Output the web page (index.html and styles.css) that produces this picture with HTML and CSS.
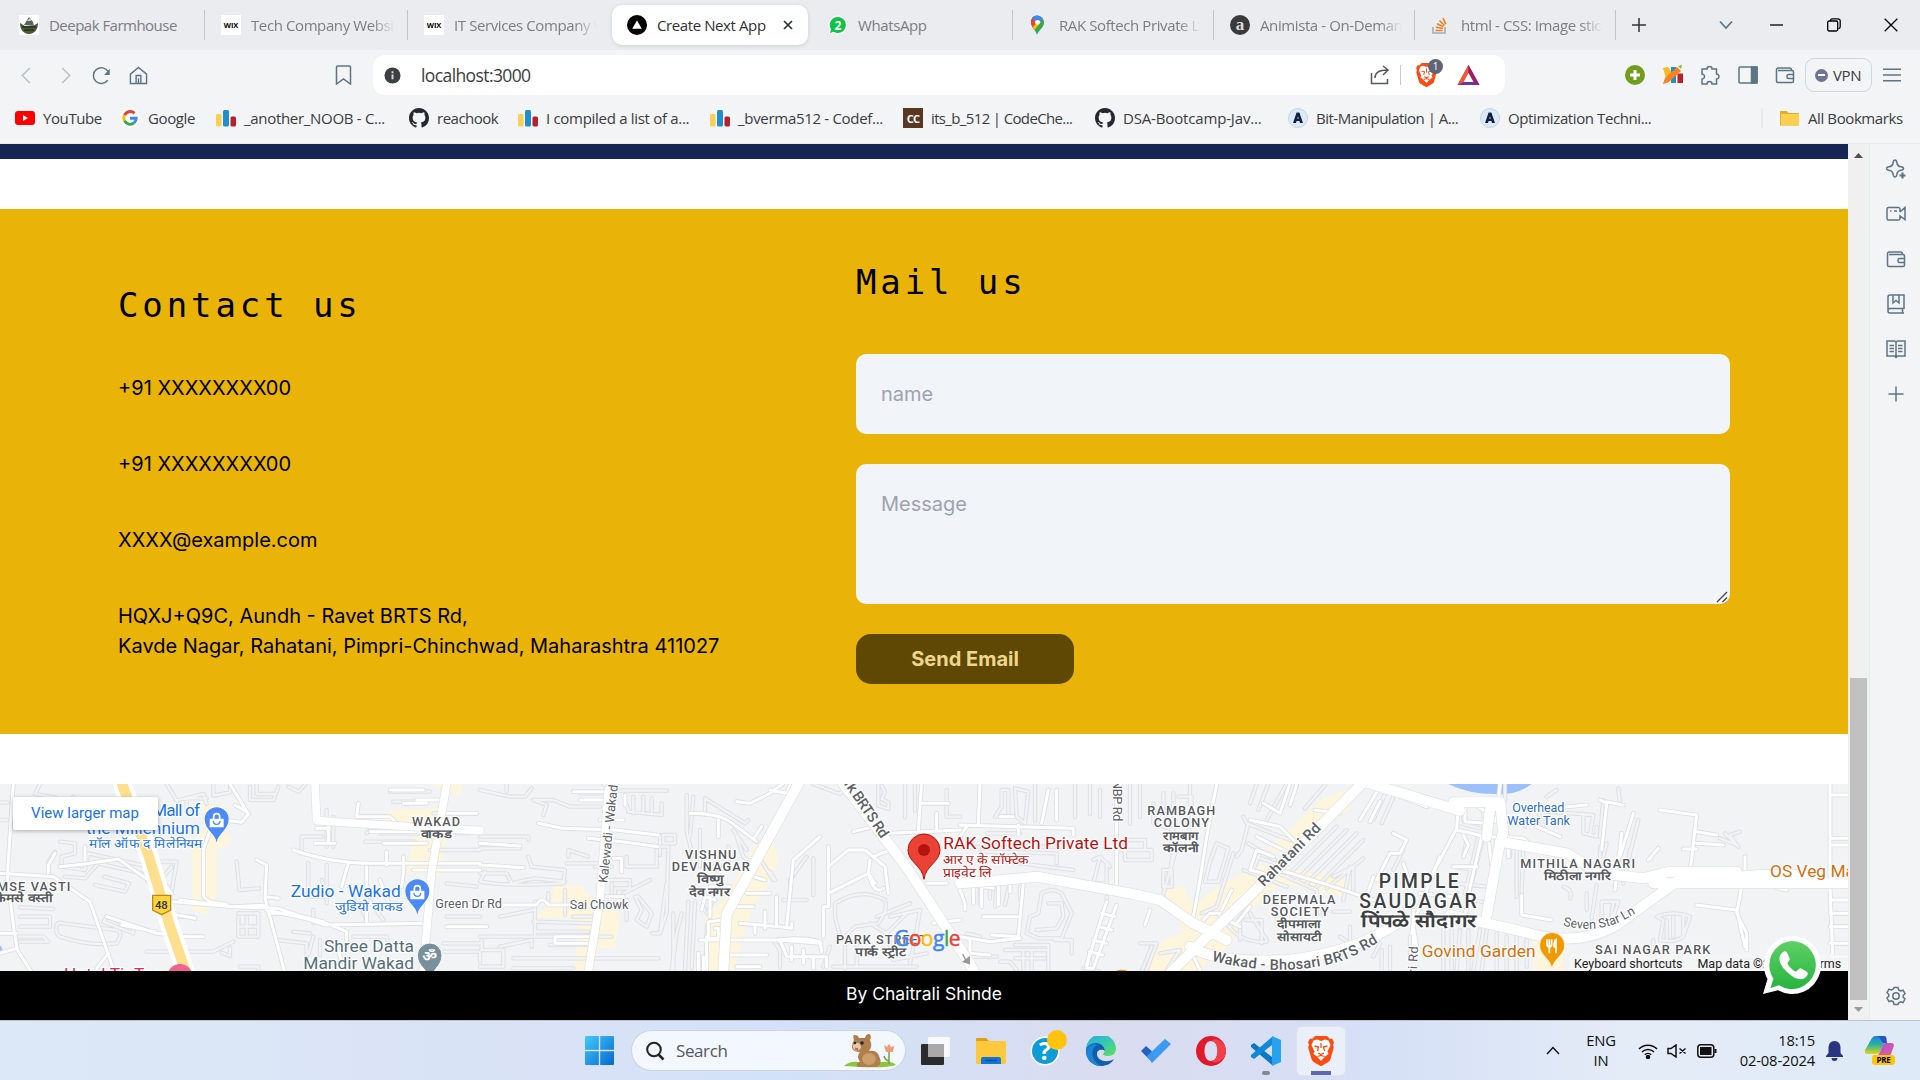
FILE: index.html
```html
<!DOCTYPE html>
<html lang="en">
<head>
<meta charset="utf-8">
<title>Create Next App</title>
<link rel="stylesheet" href="styles.css">
</head>
<body>
<svg class="defs" width="0" height="0">
  <defs>
    <symbol id="gh" viewBox="0 0 16 16"><path fill="#24292f" d="M8 0C3.58 0 0 3.58 0 8c0 3.54 2.29 6.53 5.47 7.59.4.07.55-.17.55-.38v-1.49c-2.23.48-2.7-.94-2.7-.94-.36-.92-.89-1.17-.89-1.17-.73-.5.06-.49.06-.49.8.06 1.23.83 1.23.83.71 1.23 1.87.87 2.33.66.07-.52.28-.87.5-1.07-1.77-.2-3.64-.89-3.64-3.95 0-.87.31-1.59.82-2.15-.08-.2-.36-1.02.08-2.12 0 0 .67-.21 2.2.82a7.6 7.6 0 0 1 4 0c1.53-1.04 2.2-.82 2.2-.82.44 1.1.16 1.92.08 2.12.51.56.82 1.27.82 2.15 0 3.07-1.87 3.75-3.65 3.95.29.25.54.73.54 1.48v2.2c0 .21.15.46.55.38A8 8 0 0 0 16 8c0-4.42-3.58-8-8-8z"/></symbol>
    <symbol id="cf" viewBox="0 0 20 20"><rect x="0" y="6" width="5.5" height="12.500" rx="1.500" fill="#fbcf52"/><rect x="7" y="2" width="6" height="16.500" rx="1.500" fill="#1f8fd0"/><rect x="14.500" y="8.500" width="5.500" height="10" rx="1.500" fill="#b9202c"/></symbol>
    <symbol id="brave" viewBox="0 0 26 30"><path fill="#fb4c12" d="M7 0h12l3 3 2-.4 2 3.600-1 2.600.8 2.700-3.300 11.500c-.5 1.600-1.500 2.600-3 3.600L13.500 30h-1l-6-3.400c-1.500-1-2.500-2-3-3.600L.2 11.500 1 8.800 0 6.200 2 2.600 4 3z"/><path fill="#fff" d="M13 5l4-1.500 3.500 1L22.500 9l-3 6.500 1 2.500-3.500 2.500L13 25l-4-4.500L5.500 18l1-2.500L3.500 9l2-4.500L9 3.500z"/><path fill="none" stroke="#fb4c12" stroke-width="1.300" d="M6.500 10l4 1-1 4M19.500 10l-4 1 1 4M13 7v5M10 17l3 1.500 3-1.500M9.500 20.500l3.500-1 3.500 1"/></symbol>
    <symbol id="aicon" viewBox="0 0 20 20"><circle cx="10" cy="10" r="9.500" fill="#dbe9fb" stroke="#c9d3e0"/><path d="M8.600 4.500h2.800L15 15h-3l-.6-2H8.600L8 15H5zM9.300 10.800h1.400L10 8.300z" fill="#12203f"/></symbol>
    <symbol id="wallet" viewBox="0 0 20 20"><path d="M3 3h11.500a2 2 0 0 1 2 2M3 5.500h14a1.500 1.500 0 0 1 1.500 1.500v9a1.500 1.500 0 0 1-1.500 1.500H3A1.500 1.500 0 0 1 1.500 16V4.500A1.500 1.500 0 0 1 3 3M18.500 9.500h-5a1.500 1.500 0 0 0-1.500 1.500v1a1.500 1.500 0 0 0 1.500 1.500h5"/></symbol>
    <symbol id="bag" viewBox="0 0 76 110"><path fill="#fff" d="M38 112C34 84 0 72 0 38a38 38 0 0 1 76 0c0 34-34 46-38 74z"/><path fill="#4c8bf5" d="M38 108C34 80 2 70 2 38a36 36 0 0 1 72 0c0 32-32 42-36 70z"/><path fill="#fff" d="M17 36h42v26H17z"/><path fill="none" stroke="#fff" stroke-width="5" d="M29 38v-8a9 9 0 0 1 18 0v8"/><path fill="none" stroke="#4c8bf5" stroke-width="4" d="M28 44a10 9 0 0 0 20 0"/></symbol>
    <linearGradient id="wa" x1="0" y1="0" x2="0" y2="1"><stop offset="0" stop-color="#5ed066"/><stop offset="1" stop-color="#27b43e"/></linearGradient>
    <linearGradient id="edge" x1="0" y1="0" x2="1" y2="1"><stop offset="0" stop-color="#2aa6e6"/><stop offset=".5" stop-color="#35c8b5"/><stop offset="1" stop-color="#5fe05a"/></linearGradient>
    <linearGradient id="win" x1="0" y1="0" x2="1" y2="1"><stop offset="0" stop-color="#47c8fb"/><stop offset="1" stop-color="#0368cf"/></linearGradient>
    <linearGradient id="cop" x1="0" y1="0" x2="0" y2="1"><stop offset="0" stop-color="#1580e6"/><stop offset=".5" stop-color="#2cb59a"/><stop offset="1" stop-color="#e8d418"/></linearGradient>
    <linearGradient id="cop2" x1="0" y1="0" x2="1" y2="1"><stop offset="0" stop-color="#9a50e8"/><stop offset="1" stop-color="#f0608a"/></linearGradient>
  </defs>
</svg>

<header class="tabs">
  <div class="tab"><svg class="fav" viewBox="0 0 20 20"><rect width="20" height="20" fill="#fff"/><path d="M1 8c0 7 4 11 9 11s9-4 9-11l-5 3H6z" fill="#4b5a38"/><path d="M5 10l5-8 4 5 1 4z" fill="#59665c"/><path d="M8 6l3-3 1 3z" fill="#d5dad4"/><path d="M3 12h14M5 15h10" stroke="#26301c" stroke-width="1.500"/></svg><span class="t1">Deepak Farmhouse</span></div>
  <div class="tab"><svg class="fav" viewBox="0 0 20 20"><rect width="20" height="20" fill="#fff"/><text x="10" y="12.800" text-anchor="middle" class="wix">WIX</text></svg><span class="fade t2">Tech Company Website</span></div>
  <div class="tab"><svg class="fav" viewBox="0 0 20 20"><rect width="20" height="20" fill="#fff"/><text x="10" y="12.800" text-anchor="middle" class="wix">WIX</text></svg><span class="fade t3">IT Services Company W</span></div>
  <div class="tab active"><svg class="fav" viewBox="0 0 20 20"><circle cx="10" cy="10" r="10"/><path d="M10 5.500l4.800 8.200H5.200z" fill="#fff"/></svg><span class="t4">Create Next App</span><svg class="close" viewBox="0 0 10 10"><path d="M1 1l8 8M9 1l-8 8"/></svg></div>
  <div class="tab"><svg class="fav" viewBox="0 0 20 20"><path d="M10 .5a9.500 9.500 0 1 1-5 17.700L.5 19.500 1.600 15A9.500 9.500 0 0 1 10 .5z" fill="#fff"/><path d="M10 2a8 8 0 1 1-4.500 14.700L2 18l1-3.800A8 8 0 0 1 10 2z" fill="#0fc447"/><text x="10" y="14.500" text-anchor="middle" class="badge2">2</text></svg><span class="t5">WhatsApp</span></div>
  <div class="tab"><svg class="fav" viewBox="0 0 20 20"><path d="M8 20c-1-5-6-7-6-12.500a6 6 0 0 1 6-7 7 7 0 0 1 7 7C15 13 9.500 15 8 20z" fill="#34a853"/><path d="M2 8a7 7 0 0 1 2-5.500L8 8l-4 5z" fill="#ea4335"/><path d="M3 3a6.500 6.500 0 0 1 11 1.500L9 8z" fill="#4285f4"/><path d="M3.500 12.500L10 5l2 2-6.500 8z" fill="#fbbc04"/><circle cx="8.400" cy="7.300" r="2.400" fill="#fff"/></svg><span class="fade t6">RAK Softech Private Ltd</span></div>
  <div class="tab"><svg class="fav" viewBox="0 0 20 20"><circle cx="10" cy="10" r="10" fill="#3a3a3a"/><text x="10" y="15" text-anchor="middle" class="serif-a">a</text></svg><span class="fade t7">Animista - On-Demand</span></div>
  <div class="tab"><svg class="fav" viewBox="0 0 20 20"><path d="M2 12v6h12v-6" fill="none" stroke="#a9abad" stroke-width="1.600"/><path d="M4.500 15.500h7M4.800 12.300l7 1.200M6 8.800l6.500 3M8.500 5.500l5 5M12 3l2.800 6.200" stroke="#f48024" stroke-width="1.600"/></svg><span class="fade t8">html - CSS: Image sticky</span></div>
  <div class="plus"><svg width="14" height="14" viewBox="0 0 14 14"><path d="M7 0v14M0 7h14"/></svg></div>
  <div class="wins">
    <svg width="14" height="10" viewBox="0 0 14 10"><path d="M1 1.500l6 6.500 6-6.500" stroke="#5d7583" stroke-width="1.700"/></svg>
    <svg width="14" height="14" viewBox="0 0 14 14"><path d="M0 7h13"/></svg>
    <svg width="14" height="14" viewBox="0 0 14 14"><rect x=".7" y="3" width="10" height="10" rx="1.500"/><path d="M3.500 3V2.500A1.800 1.800 0 0 1 5.300.8H11a2.200 2.200 0 0 1 2.200 2.200v5.800a1.800 1.800 0 0 1-1.800 1.800"/></svg>
    <svg width="14" height="14" viewBox="0 0 14 14"><path d="M.7.7l12.600 12.600M13.300.7L.7 13.300"/></svg>
  </div>
</header>

<div class="toolbar">
  <div class="nav">
    <svg viewBox="0 0 20 20" class="dim"><path d="M12.500 2l-8 8 8 8"/></svg>
    <svg viewBox="0 0 20 20" class="dim"><path d="M7.500 2l8 8-8 8"/></svg>
    <svg viewBox="0 0 20 20"><path d="M16.500 15A8.300 8.300 0 1 1 17 6"/><path d="M18.700 3v6.500h-6z" fill="#5d7583" stroke="none"/></svg>
    <svg viewBox="0 0 20 20"><path d="M1.500 18.500V8.500L10 1.500l8.500 7v10zM7.500 18.500V10h5v8.500M10 13v5"/></svg>
  </div>
  <svg class="mark" viewBox="0 0 20 20"><path d="M3.500 1h12a1 1 0 0 1 1 1v17l-7-5-7 5V2a1 1 0 0 1 1-1z"/></svg>
  <div class="omni">
    <svg class="info" viewBox="0 0 18 18"><circle cx="9" cy="9" r="8.500" fill="#3d4043"/><path d="M9 8v5M9 4.500v2" stroke="#ddd" stroke-width="2"/></svg>
    <span class="url">localhost:3000</span>
    <svg class="share" viewBox="0 0 20 20"><path d="M1.500 8v10.500h16V14M5 13c0-5 4-8 12-8M13 1l5 4-5 5"/></svg>
    <i class="bar"></i>
    <div class="shield"><svg width="21" height="24"><use href="#brave"/></svg><b>1</b></div>
    <svg class="bat" viewBox="0 0 22 20"><path d="M11 0l11 20H0z" fill="#6a35a0"/><path d="M11 0L0 20l6-3 5-9z" fill="#ff5429"/><path d="M11 0l11 20-6-3-5-9z" fill="#9e1f63"/><path d="M11 8l5 9H6z" fill="#fff"/></svg>
  </div>
  <div class="ext">
    <svg viewBox="0 0 20 20"><circle cx="10" cy="10" r="10" class="green"/><path d="M10 5v10M5 10h10" class="cross"/></svg>
    <svg viewBox="0 0 20 20" class="flat"><path d="M0 3l5-1 5 7-6 8z" fill="#fbb81c"/><path d="M8 2h5v16H8z" fill="#1f8fd0"/><path d="M14.500 8.500H20V18h-5.500z" fill="#b9202c"/><path d="M0 19l2-6L14 2l4 4L6 17z" fill="#f6821f"/><path d="M15 1l4-1-1 4z" fill="#7ac143"/></svg>
    <svg viewBox="0 0 20 20"><path d="M2 4h5a2.500 2.500 0 1 1 5 0h4.500v5a2.500 2.500 0 1 1 0 5v5h-4.500a2.500 2.500 0 0 0-5 0H2v-5a2.500 2.500 0 1 0 0-5z"/></svg>
    <svg viewBox="0 0 20 20"><rect x="1" y="2" width="18" height="16" rx="1"/><path d="M13.500 2H19v16h-5.500z" fill="#5d7583"/></svg>
    <svg viewBox="0 0 20 20"><use href="#wallet"/></svg>
  </div>
  <div class="vpn"><i></i>VPN</div>
  <svg class="menu" viewBox="0 0 20 16"><path d="M0 2h19M0 8h19M0 14h19"/></svg>
</div>

<nav class="marks">
  <a><svg viewBox="0 0 20 20"><rect y="3" width="20" height="14" rx="3" fill="#f00"/><path d="M8 7l5 3-5 3z" fill="#fff"/></svg>YouTube</a>
  <a><svg viewBox="0 0 20 20"><circle cx="10" cy="10" r="10" fill="#fff"/><g fill="none" stroke-width="3"><path d="M14.500 5.300A6.300 6.300 0 0 0 4.500 7.200" stroke="#ea4335"/><path d="M4.500 7.200a6.300 6.300 0 0 0 0 5.600" stroke="#fbbc05"/><path d="M4.500 12.800a6.300 6.300 0 0 0 9.600 2" stroke="#34a853"/><path d="M14.100 14.800A6 6 0 0 0 16.200 10.200H10" stroke="#4285f4"/></g></svg>Google</a>
  <a class="wide"><svg><use href="#cf"/></svg>_another_NOOB - C...</a>
  <a class="slim"><svg><use href="#gh"/></svg>reachook</a>
  <a class="wide"><svg><use href="#cf"/></svg>I compiled a list of a...</a>
  <a class="wide"><svg><use href="#cf"/></svg>_bverma512 - Codef...</a>
  <a class="narrow"><svg viewBox="0 0 20 20"><rect width="20" height="20" fill="#593723"/><text x="10" y="14.500" text-anchor="middle" class="cc">CC</text></svg>its_b_512 | CodeChe...</a>
  <a class="roomy"><svg><use href="#gh"/></svg>DSA-Bootcamp-Jav...</a>
  <a class="slim"><svg><use href="#aicon"/></svg>Bit-Manipulation | A...</a>
  <a><svg><use href="#aicon"/></svg>Optimization Techni...</a>
  <a class="all"><svg viewBox="0 0 20 20"><path d="M0 3h7l1.500 2H18a1 1 0 0 1 1 1v11.500H0z" fill="#e3b02d"/><path d="M1 6h18v11.500H1z" fill="#fbd04f"/></svg>All Bookmarks</a>
</nav>

<div class="body">
  <main class="page">
    <div class="hero-end"></div>
    <section class="contact">
      <div class="info-col">
        <h2>Contact us</h2>
        <p>+91 XXXXXXXX00</p>
        <p>+91 XXXXXXXX00</p>
        <p>XXXX@example.com</p>
        <p>HQXJ+Q9C, Aundh - Ravet BRTS Rd,<br>Kavde Nagar, Rahatani, Pimpri-Chinchwad, Maharashtra 411027</p>
      </div>
      <form class="mail">
        <h2>Mail us</h2>
        <input type="text" placeholder="name">
        <div class="area-box">
          <textarea placeholder="Message"></textarea>
          <svg class="grip" viewBox="0 0 12 12"><path d="M1 11L11 1M6.500 11L11 6.500"/></svg>
        </div>
        <button type="button">Send Email</button>
      </form>
    </section>
    <section class="map">
      <svg class="tiles" viewBox="0 42 5544 561">
        <defs>
          <g id="lanes">
            <path d="M0 98h22M0 150h22M120 42l-15 30 60 10M180 215l45 5v30l-40 10v30l70 10 10-50 180 40M165 245l-20 30v35M195 320l60 5 40-45 130 30M220 80v50h50M285 345l90 20 12-25-75-20M320 440l80 30v20l-90-35zM170 465q5-10 20-5l160 20q15 5 10 20l-10 20q-80 10-170-20-15-10-10-35zM60 412l100 5M60 440h90v30H60M50 500h80l15 15H60M440 545h200l60-30M665 548l25 10v-25M715 440v60h60v-70h-60M740 440v60M715 470h60M440 330l30 50M480 275h50l-15 90M515 290l-50 60M530 440h50M560 125v-40h60M500 42l30 50 80-20 10 30M640 42v35l50-10v-25M750 50v40h70l15-40M770 42v30h50M865 50l30 15 20-20M710 275l8 85 60-5M980 120v110M1000 140v90M925 280v100h60l-20-50M980 285v115M940 420v40M940 500l-15 55M960 510v45M720 590h55v13M830 510l90 10v70M880 485l50 5M965 200h-60v50M1170 65h120M1180 95h90M1095 215h150M1140 190h270M1100 190l20-20h100M1150 160l90 10M1300 130h130M1340 340l90 10M1340 440h100M1100 380l50 70M1060 360l40 90M1290 240h150M1060 500h100l10 40M1330 520h110M1330 545h110v30"/>
            <g transform="translate(1440 0)">
              <path d="M0 60l90 20h45l20-25M80 42v20M160 90l40 15-10 30M160 90h60l50 20h90M370 42l30 20h160M300 70h80M440 105l5 20 100 10v-35M460 80v50M490 80v45M515 85v40M0 200h145v10M0 235h120M550 195h35v25h-35zM540 195v60M525 230h40l-5 200-20 60h-25M620 75v110l25 100M640 80l-10 120M675 85l120 75 10-10M675 85v50M660 180v110M770 200l20 60 40 30M0 310h80l15 30q40-10 70-15l90 10M15 305l-15 30q80 15 250 5l5-40-100-10-10-30M265 260v-20l60 20M345 290h50M260 280h95M440 260v30h90v-50M385 330h65v25h-45v25M395 340v40M475 380l40 50-15 40-30-20 15-30-20-40zM255 360v75M205 370v20M280 440h55M165 395v100M165 485h160M60 440l100-20M160 455l180 5M0 500h220M210 525h120M5 510v30h65v50H0M60 530l95-20v20M100 565h220M100 595h180M345 565h190M340 500h55M440 390v60M430 370l80-40M580 430v170M605 430l-15 60-15 110M625 395l-10 205M645 395l-10 200M680 360v50M700 390l-20 40M680 470v130M520 490h20l20-150M745 230v50M760 180l40 60M830 250l50 80M870 305l15 25M980 260l-50 70v60M1000 265v110M910 390h70M1065 400q80-50 150-10 10 30-20 70l-70 10-40 40-10-30-10-40zM1170 460l50 30 20 70M1190 440l100-40M1210 500l70-70M1230 440l90-20-10 60-20 100M1050 530l-20 60M1095 530v65M1130 520v70M1060 590h250M1240 570l100-20M900 590v-50l-20-30h80M1000 42l80 30 20-30M1195 42v65l30 10v-20l-20-10 10-20-10-20M1275 42v100M1305 42v80M1400 60v80h40"/>
            </g>
            <g transform="translate(2880 0)">
              <path d="M125 60h20v80h-40l20-30zM165 55l40 10-10 95-25-20zM225 42v110M345 42v100M390 42v90M420 60v80M510 42v120M540 42v100M80 190h100M0 230h330M60 245l230 5v30M100 270l240 30M440 285v55h-40l20-80M400 270l20-10 30 30M440 380v20M480 240h95v30h-80v-50M495 210h60v30M580 100v60l60 20v-110M610 70v60M655 80h40v90M690 42v60M640 240l-10 70M610 300h25v50h-25zM645 250l-40 140M770 220l35 15-30 100h-40l15-60zM820 250l-50 160-45 20M245 370q30-20 60 0l30 60-30 75h-70l-35-15 10-50 25-10zM265 400h40l5 40-20 35-60 5M165 525h100v80M135 540h130M120 575h30l20 25M190 540v65M215 540v65M165 565h90M540 520h50l-30 80M575 530l-30 75M600 550l60-10-40 60M285 510h50v40M370 595l50 10M390 545v60M20 490l40 10M30 560h80M60 360v40M90 360v25M110 350l-5 60M145 355l-10 50M180 350v40M850 140l10 20q100 40 160 60M865 160l-20 80-15 20M865 220l80 50M885 260l60 20M900 250l-20 50M850 300l130 50M930 300l140 60M980 320l150-150M1010 330l150-150M1040 340l150-150M1070 350l140-140M1100 355l110-90M1120 320l60-30v70M870 100l20-58M895 120l30-78M920 150l60-108M1035 115l60-70M1240 150l40-90M1265 160l40-90M1300 300l30-60M1170 290l-20 100M1080 430l-10-70M840 440v70M850 410l-40 60M870 430l50 80M905 520v-70h-50M800 460q40 60 120 55M1120 425h50M1170 470v50l-30-20M1240 560l20-40M1265 540v60M1290 530v70M1350 500v60"/>
            </g>
            <g transform="translate(4200 0)">
              <path d="M180 110v50l60 15M250 110v30l50 10M315 42v50M385 120l-10 50M410 110l20 60M440 80l30-20M440 125l140 10-10 60M550 130v60l40 10v-30M610 90l-10 110M655 55l5 45M600 230v70M620 220l-15 60M665 225l-20 130M690 240l-20 100M715 150l-30 120M960 205l50 20-20-30 30-10M975 190l40 40M290 200l-5 80M330 210v50M250 200l-40 160M235 200l-40 170M350 230v150M370 230l-5 140M200 210l-10 50M160 290l60 10M170 340l90 10M220 390l45 10M560 370v50M590 345l-15 100M605 395h50l-20 60h-30zM490 350q30 10 20 35M640 400l-10 60M770 440q50-20 100 0l-20 60q-30 20-70 10l10-60zM800 450v60M820 440v60M850 440v50M240 480l-20 120M260 480l-15 120M290 490v110M320 500v100M350 500v100M130 480v120M155 480v120M180 480l-10 120M205 480v120M380 510v80M760 510v70l-30 10M1010 570l120 10M1050 590h120"/>
            </g>
          </g>
          <g id="streets">
            <path d="M40 42L22 320l20 160 10 60 40 63M0 310l160 10 110 75 72 208M290 595l35-45M0 490h48M0 550l50-15M145 310v-25l20-35M180 290l75-8 100-15 85 60M255 270v-40M380 200l60 70 75 100M520 395l180 15 100-5M390 200l80 20-30-40M630 180l-20 60v140l20 15 50 8M690 42l55 90-20 25-80-10M740 125l-35-20M770 270l30 15-5 100 60 225M795 380l40 5M800 420l180 40M560 500h50M530 435l55 10M465 485l-100-20M320 440l150 50 90 10M540 390l160 20 135 5 140 50 300-5M810 430h60l100 25M880 240q110 40 240 40h320M980 460l60 25v40h-30l15 50M1100 290v170M1045 280l-20 70M1160 245v40M1210 260v50M1150 220h130M1440 300h-200M1075 100l-5 40h100l20 20M985 165v55M950 175h40M945 220h60M1110 185h150M1250 90h80M1170 60h100M1210 100h70M1330 400h110M1340 470h100M1330 130h100M955 130l-15-90M1210 310l-5 40M1170 410l-30-80"/>
            <g transform="translate(1440 0)">
              <path d="M175 160l70 15 160 5 130 15M325 205l100 10 110 15M280 65h110M300 90h90M360 150h70M0 220l120 8M0 285l130 8M0 405h170q15-30 35 0h150M0 470h20M225 500h110v20H225zM400 265h25v40M380 380h50M435 75v30M630 130q80 0 120 25l80 60M715 150v50M770 95l40 5 60-30 40-30M870 60l50 10 10-25M825 200l20-30M780 460l120 10 35 5v-15M855 425v50M825 470v20M770 410h50M690 350h60M690 380v60M705 390l-30-10-10 40M735 450l-50 5v50h30v-30h-10M680 500v100M660 510h240l120 10M900 510l20 50h80v35M935 530v40M970 540v40M890 510q80-10 130 5l5 30M750 555h110M770 590h70M820 320l35 10M800 370h70M890 380v90M920 470l20-200 80-70M1045 230v180h-15v90M1045 290l60-50h50l60 50 10 80M1045 370l120-60 10 30q15 30 35 15M1180 260l50-20M1170 270l-5 40 20 30M1230 190l210-10M1120 185l60-15M1325 42l-10 140M1320 100h85M1370 130v50M1340 340h60M1360 460l80-10M655 550v50M670 560v40M1000 560h40v30"/>
            </g>
            <g transform="translate(2880 0)">
              <path d="M60 42l-5 120M0 165l340 10v20M175 165v30M0 200l20-30M0 340l100 15M0 360l15 40v20M65 350v60M40 355v45M115 330v75M150 335v30M190 340l-15 160-80-5M70 440h110M0 500l90 15 90-10M30 510v40l60 5M440 395l-60 190M470 405l-70 190h-20l10-50M425 430l40 10M415 470l40 10M400 510l40 10M388 545l40 10M470 42v330M770 42L740 200l-20 130-20 110M265 60l-20 100M290 60v90M120 140h40M570 420l-15 45M780 430h-30l-20 20M815 360l-30 60M830 460l40-50M780 440l60 30M870 150l90 20 60 60M890 200l100 50M940 260l-50-20-20 60 40 10M960 300l160 50 120 40M1140 130l-75-10M1200 150l60-100M1230 155l30-60M1300 190l40 20-20 40h-30l-40 80M1440 260l-80 200-5 30M1240 320l-20 60M1360 470l10 60M700 560l20 40M910 100l50 30 30-90M990 105l20-60M1320 80l80 30"/>
            </g>
            <g transform="translate(4200 0)">
              <path d="M175 105l-5 70-90 170M195 110v45l70 5 30-10-60-40M0 60l80 50M170 180l90 20 110 5 50 40h60M245 200l-40 175M265 205l10 80M325 200v60M160 290h70M190 195l15 30-15 35M40 420v150M60 370l100 10M210 380l-20 70M365 375v60l90 15M300 42l-5 50M410 170l70 30M780 120l110 15-15 130-5 40M890 185l60 10M890 220l80 5M850 237h40M745 270l30-35M600 90l20 10-15 140M665 190l-20 170M700 130l-40 130M620 95l50 10M840 325l-60 40-70 55M890 405l120 15 25 110M1025 350l-15 80 30 60v50M1035 260v50M1060 350l20-10 80 20M1290 42v310l10 250M1290 75h60M1290 205h60M1290 225h60M1290 390h60M1290 430h60M1290 470h60M1290 520h60M1290 560h60M500 110l60-5M30 340l-20-60"/>
            </g>
          </g>
          <g id="roads">
            <path d="M945 42l5 110 150 10 340 20"/>
            <path d="M1340 42l-45 260-25 300"/>
            <g transform="translate(1440 0)"><path d="M385 60l-25 330-35 213"/></g>
          </g>
          <g id="arterials">
            <path d="M2395 42l-215 390-10 171M2530 42l190 250 190 290 20 40"/>
            <path d="M2880 340l130-10 100-10 280 50 90 20 100 70 100 50M3500 620l100-100 240-230 245-248"/>
            <path d="M3570 530q80 50 290 40 200-20 340-115M4080 32l300 90M4480 100l-10 20-10 80M4360 97h140l10 90-10 30-40 220M4500 215l200 35 100 60 130 15 80-20h200"/>
            <path d="M4350 435l220 50q160 50 280-20l180-130 250-20h140"/>
            <path d="M4960 340h600"/>
          </g>
        </defs>
        <rect y="42" width="5544" height="561" fill="#f1f3f5"/>
        <g class="sand">
          <path d="M605 180h70l20 30-20 20-25 10v150l-45-5 20 50-50-15V240zM600 100l80 10v40h-60M1170 120l150-5-20 80-160-50zM1240 200h100l-20 120-40-10h-60zM1290 42h100l-15 35z"/>
          <path transform="translate(1440 0)" d="M220 350l90-5v20l110 70-15 100h-50l-15 68h-60l20-110-10-50H165l50-50zM830 220l50-10 15 60-30 70-50 80-30 90-20 93h-95l5-160 60-60z"/>
          <path transform="translate(2880 0)" d="M610 360l60-10 30 60 60-50 120-70 70-10 50 20 170 20-10 60-200-40-110 100-40 90-40 20-60 60H550l60-100 60-20-20-60zM920 240L1080 90l80-30 15 50-100 80-80 60z"/>
          <path d="M4600 510h90v93h-90z"/>
        </g>
        <path d="M4345 42h250q-45 35-110 30-80 0-140-30z" fill="#9cc0f9"/>
        <path d="M0 525l8 12-8 8z" fill="#9cc0f9"/>
        <use href="#lanes" class="lane-edge"/><use href="#lanes" class="lane"/>
        <use href="#streets" class="st-edge"/><use href="#streets" class="st"/>
        <use href="#roads" class="rd-edge"/><use href="#roads" class="rd"/>
        <use href="#arterials" class="art-edge"/><use href="#arterials" class="art"/>
        <path class="hw-edge" d="M362 30l85 230 60 200 55 160"/><path class="hw" d="M362 30l85 230 60 200 55 160"/>
        <path d="M2888 552l10 20M2890 575l18 6 0-20z" stroke="#999" stroke-width="4" fill="#999"/>
        <path d="M458 376h54v44l-27 14-27-14z" fill="#fbd33c" stroke="#b98b19" stroke-width="4"/>
        <g class="lbl">
          <text x="484" y="416" text-anchor="middle" class="shield-no">48</text>
          <g class="poi blue">
            <text x="600" y="137" text-anchor="end" textLength="144">Mall of</text>
            <text x="600" y="192" text-anchor="end" textLength="342">the Millennium</text>
            <text x="608" y="234" text-anchor="end" class="hi" textLength="340" lengthAdjust="spacingAndGlyphs">मॉल ऑफ द मिलेनियम</text>
            <text x="1202" y="380" text-anchor="end" textLength="330">Zudio - Wakad</text>
            <text x="1210" y="424" text-anchor="end" class="hi" textLength="204" lengthAdjust="spacingAndGlyphs">जुडियो वाकड</text>
          </g>
          <g class="poi slate">
            <text x="1242" y="545" text-anchor="end" textLength="270">Shree Datta</text>
            <text x="1242" y="598" text-anchor="end" textLength="332">Mandir Wakad</text>
          </g>
          <text x="490" y="630" text-anchor="end" class="poi pink" textLength="298">Hotel TipTop</text>
          <g class="area">
            <text x="1308" y="167" textLength="144">WAKAD</text><text x="1308" y="204" class="hi" textLength="92" lengthAdjust="spacingAndGlyphs">वाकड</text>
            <text x="101" y="362" textLength="220">MSE VASTI</text><text x="72" y="397" class="hi" textLength="172" lengthAdjust="spacingAndGlyphs">केमसे वस्ती</text>
            <text x="2132" y="266" textLength="154">VISHNU</text><text x="2132" y="303" textLength="234">DEV NAGAR</text>
            <text x="2130" y="340" class="hi" textLength="76" lengthAdjust="spacingAndGlyphs">विष्णु</text><text x="2129" y="378" class="hi" textLength="124" lengthAdjust="spacingAndGlyphs">देव नगर</text>
            <text x="2644" y="522" textLength="272">PARK STREET</text><text x="2642" y="558" class="hi" textLength="152" lengthAdjust="spacingAndGlyphs">पार्क स्ट्रीट</text>
            <text x="3544" y="135" textLength="204">RAMBAGH</text><text x="3544" y="172" textLength="166">COLONY</text>
            <text x="3543" y="209" class="hi" textLength="108" lengthAdjust="spacingAndGlyphs">रामबाग</text><text x="3543" y="246" class="hi" textLength="106" lengthAdjust="spacingAndGlyphs">कॉलनी</text>
            <text x="3897" y="401" textLength="218">DEEPMALA</text><text x="3899" y="438" textLength="174">SOCIETY</text>
            <text x="3897" y="475" class="hi" textLength="132" lengthAdjust="spacingAndGlyphs">दीपमाला</text><text x="3897" y="512" class="hi" textLength="134" lengthAdjust="spacingAndGlyphs">सोसायटी</text>
            <text x="4733" y="294" textLength="344">MITHILA NAGARI</text><text x="4733" y="331" class="hi" textLength="200" lengthAdjust="spacingAndGlyphs">मिठीला नगरि</text>
            <text x="4958" y="552" textLength="346">SAI NAGAR PARK</text>
          </g>
          <g class="city">
            <text x="4256" y="354" textLength="240">PIMPLE</text><text x="4254" y="414" textLength="352">SAUDAGAR</text>
            <text x="4256" y="472" class="hib" textLength="344" lengthAdjust="spacingAndGlyphs">पिंपळे सौदागर</text>
          </g>
          <g class="road-name">
            <text x="1306" y="415" textLength="200">Green Dr Rd</text>
            <text x="1709" y="416" textLength="176">Sai Chowk</text>
            <text transform="translate(1822 340) rotate(-84)" textLength="296">Kalewadi - Wakad</text>
            <text transform="translate(2505 2) rotate(56)" textLength="248" class="mid">Park BRTS Rd</text>
            <text transform="translate(3338 30) rotate(90)" textLength="124">NBP Rd</text>
            <text transform="translate(3792 352) rotate(-45.500)" textLength="246" class="mid">Rahatani Rd</text>
            <path id="bhosari" d="M3634 572q220 56 400-2 60-25 130-72" fill="none"/>
            <text class="mid"><textPath href="#bhosari" textLength="520">Wakad - Bhosari BRTS Rd</textPath></text>
            <path id="seven" d="M4688 466q110 30 200-25 25-14 50-30" fill="none"/>
            <text><textPath href="#seven" textLength="230">Seven Star Ln</textPath></text>
            <text transform="translate(4250 612) rotate(-87)" textLength="82">ri Rd</text>
          </g>
          <g class="water"><text x="4615" y="125" textLength="156">Overhead</text><text x="4616" y="166" textLength="188">Water Tank</text></g>
          <g class="poi red">
            <text x="2830" y="237" textLength="554">RAK Softech Private Ltd</text>
            <text x="2830" y="281" class="hi" textLength="258" lengthAdjust="spacingAndGlyphs">आर ए के सॉफ्टेक</text>
            <text x="2830" y="322" class="hi" textLength="146" lengthAdjust="spacingAndGlyphs">प्राइवेट लि</text>
          </g>
          <g class="poi orange"><text x="4265" y="562" textLength="342">Govind Garden</text><text x="5310" y="320">OS Veg Mart</text></g>
        </g>
        <use href="#bag" x="612" y="110" width="76" height="110"/>
        <use href="#bag" x="1214" y="326" width="76" height="110"/>
        <path d="M1290 628c-4-28-38-38-38-72a37 37 0 0 1 74 0c0 34-32 44-36 72z" fill="#78909c" stroke="#fff" stroke-width="3"/><text x="1289" y="574" text-anchor="middle" class="om">ॐ</text>
        <circle cx="540" cy="620" r="38" fill="#f06292"/>
        <ellipse cx="3366" cy="614" rx="26" ry="15" fill="#f29900"/>
        <path d="M2772 328c-5-42-48-52-48-88a48 48 0 0 1 96 0c0 36-43 46-48 88z" fill="#ea4335" stroke="#b31412" stroke-width="3"/><circle cx="2772" cy="240" r="18" fill="#b31412"/>
        <path d="M4656 598c-4-34-37-40-37-73a37 37 0 0 1 75 0c0 33-34 39-38 73z" fill="#f29900" stroke="#fff" stroke-width="2"/><path d="M4641 508v14q0 9 7 9t7-9v-14M4648 508v42M4668 550v-42q-6 4-6 22h6" stroke="#fff" stroke-width="5" fill="none"/>
      </svg>
      <a class="larger">View larger map</a>
      <div class="glogo"><i>G</i><i>o</i><i>o</i><i>g</i><i>l</i><i>e</i></div>
      <div class="attrib"><span>Keyboard shortcuts</span><span>Map data ©2024</span><span class="terms">Terms</span></div>
    </section>
    <footer>By Chaitrali Shinde</footer>
    <svg class="wa" viewBox="0 0 60 60"><path d="M30 1a29 29 0 1 1-14 54.300L1 59l4.500-15A29 29 0 0 1 30 1z" fill="#fff"/><path d="M30 6a24 24 0 1 1-13 44.300L8.500 53l3-9.500A24 24 0 0 1 30 6z" fill="url(#wa)"/><path d="M21 17c-6 5-4 12 3 19s15 11 20 6c3-3 2-5-1-6.500l-4-2c-2-1-3 2-4.500 3-2 .5-8-5-9-8 0-2 3-2.500 2-5l-2-5c-1-2.500-2.500-3-4.500-1.500z" fill="#fff"/></svg>
  </main>
  <div class="scroll"><svg width="9" height="6" viewBox="0 0 9 6"><path d="M4.500 0L9 5H0z" fill="#4f4f4f"/></svg><i></i><svg width="9" height="6" viewBox="0 0 9 6"><path d="M0 0h9L4.500 5z" fill="#9b9b9b"/></svg></div>
  <aside class="side">
    <svg viewBox="0 0 20 20"><path d="M9 1q1.500 0 1.800 2.500.7 4 4.200 4.200 2.500.3 2.500 1.800t-2.500 1.800q-3.500.4-4.200 4.200Q10.500 18 9 18t-1.800-2.500Q6.500 11.700 3 11.300.5 11 .5 9.500T3 7.700q3.500-.2 4.200-4.200Q7.500 1 9 1z"/><path d="M16.500 13.500v6M13.500 16.500h6" stroke-width="2.200"/></svg>
    <svg viewBox="0 0 20 20"><path d="M14 8V5a1.500 1.500 0 0 0-1.500-1.500h-10A1.500 1.500 0 0 0 1 5v9.500A1.500 1.500 0 0 0 2.500 16h10a1.500 1.500 0 0 0 1.500-1.500V12l5 3.500v-12L14 8M4 7h1.500M8 7h3"/></svg>
    <svg viewBox="0 0 20 20"><use href="#wallet"/></svg>
    <svg viewBox="0 0 20 20"><path d="M18 15V1H4a2 2 0 0 0-2 2v14a2 2 0 0 0 2 2h14M2 17a2 2 0 0 1 2-2.500h14M16.500 15v4M7 1v8l3-2.500L13 9V1"/></svg>
    <svg viewBox="0 0 20 20"><path d="M1 2h7.500L10 3l1.500-1H19v15h-7.500L10 18.500 8.500 17H1zM10 3v15M3.500 6.500H8M3.500 9.500H8M3.500 12.500H8M12 6.500h4.500M12 9.500h4.500M12 12.500h4.500"/></svg>
    <svg viewBox="0 0 20 20"><path d="M10 2.500v15M2.500 10h15"/></svg>
    <svg class="gear" viewBox="0 0 20 20"><circle cx="10" cy="10" r="3.200"/><path d="M8 1.500h4l.7 2.500 1.800 1 2.500-.8 2 3.500-1.800 1.800v1.800l1.800 1.700-2 3.500-2.500-.7-1.800 1L12 18.500H8l-.7-2.700-1.800-1-2.500.7-2-3.500 1.800-1.700V8.500L1 6.700l2-3.500 2.500.8 1.800-1z"/></svg>
  </aside>
</div>

<footer class="taskbar">
  <svg class="start" viewBox="0 0 30 30"><path d="M0 1a1 1 0 0 1 1-1h13.300v14.300H0zM15.700 0H29a1 1 0 0 1 1 1v13.300H15.700zM0 15.700h14.300V30H1a1 1 0 0 1-1-1zM15.700 15.700H30V29a1 1 0 0 1-1 1H15.700z" fill="url(#win)"/></svg>
  <div class="search"><svg width="20" height="20" viewBox="0 0 20 20"><circle cx="9" cy="8.500" r="6.800" fill="none" stroke="#222" stroke-width="2"/><path d="M13.500 13.500l5 5" stroke="#222" stroke-width="2.500"/></svg><span>Search</span>
    <svg width="52" height="34" viewBox="0 0 52 34"><path d="M0 32q6-5 14-4h26q8-1 12 3-12 4-52 1z" fill="#8cc63f"/><path d="M10 6q-2-5 1-5 3 0 4 3h6q1-4 4-4 3 1 1 6 3 6-1 11 8-1 10 5 4 8-2 11H15q-3 0-2-3 1-2 3-2-4-6 0-10-8 0-8-5 0-4 2-7z" fill="#b07d4b"/><ellipse cx="25" cy="25" rx="7" ry="6" fill="#c9a06d"/><path d="M9 13q0-4 4-4t4 5q-3 4-7 2z" fill="#e6cba4"/><circle cx="18" cy="9" r="1.800" fill="#1d2c50"/><circle cx="11" cy="9" r="1.200" fill="#1d2c50"/><path d="M11 14.500l3 1" stroke="#c2604f" stroke-width="2"/><path d="M45 30V17M45 27q-4-1-5-5" stroke="#6da544" stroke-width="1.500" fill="none"/><path d="M40 11l3 2 2-3 2 3 3-1-1 6h-7z" fill="#f29b76"/></svg>
  </div>
  <div class="apps">
    <svg viewBox="0 0 30 30"><rect x="0" y="8" width="23" height="21" rx="1" fill="#2b2b2b"/><rect x="7" y="1" width="22" height="20" rx="1" fill="#fff" opacity=".85"/><path d="M7 8h16v13H7z" fill="#a9a9a9"/></svg>
    <svg viewBox="0 0 30 30"><path d="M0 3a1 1 0 0 1 1-1h9l3 3h16v8H0z" fill="#e09f13"/><rect y="5" width="30" height="23" rx="1" fill="#fcc93c"/><path d="M5 28v-5a2 2 0 0 1 2-2h16a2 2 0 0 1 2 2v5z" fill="#1177d6"/><path d="M9 24.500h12" stroke="#0a4f96" stroke-width="1.500"/></svg>
    <svg viewBox="0 0 30 30" overflow="visible"><circle cx="14" cy="15" r="14.500" fill="#fff"/><circle cx="14" cy="15" r="13" fill="#0d9cd6"/><text x="14" y="24" text-anchor="middle" class="help">?</text><circle cx="26" cy="4" r="10" fill="#ffc20e"/></svg>
    <svg viewBox="0 0 30 30"><path d="M0 15A15 15 0 0 1 30 12c0 5-3 8-8 8-4 0-5-1-5-2l2-3c0-5-4-6-7-6-6 0-11 3-12 8z" fill="url(#edge)"/><path d="M0 14c1-4 5-7 10-7s9 4 9 8c-2-2-8-2-8 3s6 8 11 7c2 0 4-1 6-2-3 5-8 7-13 7C6 30 0 23 0 15z" fill="#0f5fae"/><path d="M0 15c2-6 8-8 12-6-7 1-9 14 3 21C6 30 0 23 0 15z" fill="#1b84d6"/></svg>
    <svg viewBox="0 0 30 30"><path d="M0 15l5-5 8 7-2 9z" fill="#2263c4"/><path d="M6 20L24 3l6 5-19 19z" fill="#3c9bf0"/></svg>
    <svg viewBox="0 0 30 30"><path fill-rule="evenodd" d="M15 0a15 15 0 1 1 0 30 15 15 0 0 1 0-30zm0 5c-4 0-6.500 4-6.500 10s2.500 10 6.500 10 6.500-4 6.500-10S19 5 15 5z" fill="#e2182c"/><path d="M15 5C19 0 30 6 30 15S20 29 15 25c4 0 6.500-4 6.500-10S19 5 15 5z" fill="#f5404a"/></svg>
    <svg viewBox="0 0 30 30" overflow="visible"><path d="M0 9l3-2 18 14v8L0 11z" fill="#0a78c2"/><path d="M0 21l3 2L21 9V1L0 19z" fill="#0f8ad8"/><path d="M21 0l9 4v22l-9 4z" fill="#27a3ee"/><rect x="11" y="35" width="8" height="4" rx="2" fill="#84898f"/></svg>
    <div class="cur"><svg width="26" height="30"><use href="#brave"/></svg></div>
  </div>
  <div class="tray">
    <svg class="up" width="14" height="9" viewBox="0 0 14 9"><path d="M1 8l6-6.500L13 8"/></svg>
    <span class="lang">ENG<br>IN</span>
    <svg class="wifi" width="20" height="16" viewBox="0 0 20 16"><path d="M1 6a12.500 12.500 0 0 1 18 0M4 9a8.500 8.500 0 0 1 12 0M6.800 11.800a4.600 4.600 0 0 1 6.400 0"/><circle cx="10" cy="14" r="1.500" fill="#111"/></svg>
    <svg class="mute" width="20" height="14" viewBox="0 0 20 14"><path d="M1 4.500h3L9 1v12L4 9.500H1zM12.500 4.500l6 5M18.500 4.500l-6 5"/></svg>
    <svg class="batt" width="20" height="14" viewBox="0 0 20 14"><rect x=".8" y=".8" width="16" height="12.400" rx="3"/><rect x="3" y="3" width="11.500" height="8" fill="#111" stroke="none"/><path d="M18.500 5v4" stroke-width="2"/></svg>
    <span class="clock">18:15<br>02-08-2024</span>
    <svg class="bell" width="17" height="20" viewBox="0 0 17 20"><path d="M8.500 0c4 0 6 3 6 7v5l2.500 3v1H0v-1l2.500-3V7c0-4 2-7 6-7zM5.500 17h6a3 3 0 0 1-6 0z" fill="#2b3480" stroke="none"/></svg>
    <svg class="copilot" width="30" height="30" viewBox="0 0 30 30"><path d="M7 2q1-2 4-2h8q3 0 2 3l-6 13q-1 2-4 2H2q-3 0-2-4z" fill="url(#cop)"/><path d="M20 7h6q4 0 2.500 4L26 18q-1 2-3 2H11q3-1 4-4l3-7q.7-2 2-2z" fill="url(#cop2)"/><path d="M12 0h7q2 0 2.500 3L22 7h-3q-2 0-3-3-1-3-4-4z" fill="#2a52c8"/><rect x="7" y="19" width="23" height="10" rx="3" fill="#fdc60b"/><text x="18.500" y="27" text-anchor="middle" class="pre">PRE</text></svg>
  </div>
</footer>
</body>
</html>
```
FILE: styles.css
```css
* { box-sizing: border-box; }
body {
  margin: 0;
  width: 1920px;
  height: 1080px;
  overflow: hidden;
  display: flex;
  flex-direction: column;
  font-family: "Open Sans", "Noto Sans", sans-serif;
  background: #f3f4f6;
  color: #3a3c40;
}
.defs { position: absolute; }
i { font-style: normal; }

/* tab strip */
.tabs {
  flex: none;
  height: 50px;
  display: grid;
  grid-template-columns: 205px 203px 201px 201px 203px 201px 201px 201px 46px 1fr;
  align-items: center;
  background: #ebecf0;
}
.tab {
  height: 30px;
  display: flex;
  align-items: center;
  gap: 10px;
  padding: 0 12px 0 16px;
  border-right: 1px solid #c3c4c7;
  font-size: 15px;
  letter-spacing: -.4px;
  color: #7b7d81;
  white-space: nowrap;
}
.tab:first-child { padding-left: 19px; }
.tab:first-child span { letter-spacing: -.52px; }
.tab:nth-child(3) { border: 0; }
.tab:nth-child(5) { padding-left: 18px; }
.tab.active {
  height: 40px;
  margin-left: 3px;
  margin-right: 3px;
  padding: 0 15px 0 15px;
  width: 196px;
  border: 0;
  border-radius: 10px;
  background: #fff;
  color: #303236;
  box-shadow: 0 1px 4px #0000001f;
}
.tab span { overflow: hidden; }
.fav { flex: none; width: 20px; height: 20px; }
.fade { flex: 1; -webkit-mask-image: linear-gradient(90deg, #000 84%, transparent); mask-image: linear-gradient(90deg, #000 84%, transparent); }
.wix { font: bold 7.5px "Open Sans", sans-serif; letter-spacing: 0; }
.badge2 { font: bold 12px "Open Sans", sans-serif; fill: #fff; letter-spacing: 0; }
.serif-a { font: bold 17px "Liberation Serif", serif; fill: #ddd; letter-spacing: 0; }
.cc { font: bold 11px "Open Sans", sans-serif; fill: #fff; }
.close { width: 10px; height: 10px; margin-left: auto; stroke: #303236; stroke-width: 1.7; }
.plus { display: flex; justify-content: center; }
.plus svg { stroke: #303236; stroke-width: 1.5; }
.wins { display: flex; align-items: center; justify-content: flex-end; gap: 43px; padding-right: 22px; }
.wins svg { fill: none; stroke: #000; stroke-width: 1.3; }
.wins svg:first-child { margin-right: -6px; }

/* toolbar */
.toolbar {
  flex: none;
  height: 50px;
  display: flex;
  align-items: center;
}
.toolbar svg { fill: none; stroke: #5d7583; stroke-width: 1.5; }
.nav { display: flex; gap: 18px; padding-left: 18px; width: 334px; }
.nav svg { width: 19px; height: 19px; }
.nav .dim { stroke: #b5bfc6; }
.mark { width: 20px; height: 20px; margin-right: 19px; }
.omni {
  width: 1132px;
  height: 40px;
  border-radius: 12px;
  background: #fff;
  display: flex;
  align-items: center;
}
.omni .info { width: 17px; height: 17px; margin-left: 11px; stroke: none; }
.url { flex: 1; padding-left: 20px; font-size: 17.500px; letter-spacing: -.6px; color: #3a3c40; }
.omni .share { width: 20px; height: 20px; stroke: #55585c; }
.bar { width: 1px; height: 20px; margin: 0 15px 0 10px; background: #c9cbcf; }
.shield { position: relative; display: flex; margin-right: 20px; }
.shield svg { stroke: none; }
.shield b {
  position: absolute;
  left: 12px;
  top: -4px;
  width: 15px;
  height: 15px;
  border-radius: 50%;
  background: #5f6577;
  color: #fff;
  font: 10px/15px "Open Sans", sans-serif;
  text-align: center;
}
.omni .bat { width: 23px; height: 20px; stroke: none; margin-right: 25px; }
.ext { display: flex; gap: 17.500px; margin-left: 120px; }
.ext svg { width: 20px; height: 20px; }
.ext .flat { stroke: none; }
.green { fill: #719c1c; stroke: none; }
.cross { stroke: #fff; stroke-width: 3; }
.vpn {
  display: flex;
  align-items: center;
  gap: 5px;
  width: 67px;
  height: 34px;
  margin-left: 10px;
  padding-left: 9px;
  border: 1px solid #ccd7de;
  border-radius: 9px;
  font-size: 15px;
  letter-spacing: -.4px;
}
.vpn i { width: 13px; height: 13px; border-radius: 50%; background: linear-gradient(#fff, #fff) center/7px 2px no-repeat #6f7395; }
.toolbar .menu { width: 19px; height: 16px; margin-left: 11px; }

/* bookmarks */
.marks {
  flex: none;
  height: 44px;
  display: grid;
  grid-template-columns: 105px 96px 193px 109px 192px 193px 192px 193px 192px 281px 1fr;
  align-items: center;
  padding: 0 0 7px 15px;
  border-bottom: 1px solid #e9eaec;
  font-size: 15px;
  letter-spacing: -.4px;
  white-space: nowrap;
}
.marks a { display: flex; align-items: center; gap: 8px; }
.marks .wide { letter-spacing: -.3px; }
.marks .slim { letter-spacing: -.5px; }
.marks .narrow { letter-spacing: -.64px; }
.marks .roomy { letter-spacing: -.16px; }
.marks svg { flex: none; width: 20px; height: 20px; }
.marks .all { height: 20px; border-left: 2px solid #e9eaec; padding-left: 17px; }

/* content row */
.body { flex: none; height: 876px; display: flex; }
.page { width: 1848px; display: flex; flex-direction: column; position: relative; background: #fff; }
.hero-end { flex: none; height: 15px; background: #172554; margin-bottom: 50px; }
.contact {
  flex: none;
  height: 525px;
  margin-bottom: 50px;
  padding: 50px 118px 0 118px;
  display: grid;
  grid-template-columns: 738px 1fr;
  background: #eab308;
  font: 20px/30px Inter, sans-serif;
  color: #000;
}
.contact h2 {
  margin: 0;
  font: 400 34px/46px "DejaVu Sans Mono", monospace;
  letter-spacing: 3.900px;
}
.info-col { padding-top: 23px; }
.info-col h2 { margin-bottom: 45px; }
.info-col p { margin: 0 0 46px; }
.mail { display: flex; flex-direction: column; }
.mail h2 { margin-bottom: 49px; }
.mail input, .mail textarea {
  display: block;
  width: 100%;
  border: 0;
  border-radius: 10px;
  background: #f1f5f9;
  padding: 25px;
  font: 20px/30px Inter, sans-serif;
  margin-bottom: 30px;
  resize: none;
}
.mail input { height: 80px; }
.mail textarea { height: 140px; }
.mail ::placeholder { color: #9ca3af; }
.area-box { position: relative; }
.grip { position: absolute; right: 2px; bottom: 31px; width: 12px; height: 12px; stroke: #444; stroke-width: 1.3; }
.mail button {
  width: 218px;
  height: 50px;
  border: 0;
  border-radius: 15px;
  background: #5e4803;
  color: #eed68c;
  font: 700 20px/30px Inter, sans-serif;
}

/* map */
.map { flex: none; height: 187px; position: relative; overflow: hidden; }
.tiles { display: block; width: 1848px; height: 187px; }
.tiles use, .hw, .hw-edge { fill: none; stroke-linecap: round; stroke-linejoin: round; }
.sand { fill: #fdf5dc; }
.lane-edge { stroke: #dee0e4; stroke-width: 13; }
.lane { stroke: #f2f3f5; stroke-width: 7; }
.st-edge { stroke: #dcdee2; stroke-width: 14; }
.st { stroke: #fff; stroke-width: 9; }
.rd-edge { stroke: #dfe1e5; stroke-width: 27; }
.rd { stroke: #fff; stroke-width: 23; }
.art-edge { stroke: #dfe1e5; stroke-width: 34; }
.art { stroke: #fff; stroke-width: 30; }
.hw-edge { stroke: #fff; stroke-width: 56; }
.hw { stroke: #fddf8e; stroke-width: 31; }
.lbl text { font-family: Roboto, sans-serif; paint-order: stroke; stroke: #fff; stroke-width: 7; stroke-linejoin: round; }
.lbl .shield-no { font-size: 34px; font-weight: 500; fill: #333; stroke: none; }
.poi text, .lbl text.poi { font-size: 52px; }
.lbl .poi .hi { font-size: 38px; }
.blue { fill: #1a73e8; }
.slate { fill: #546e7a; }
.pink { fill: #e91e63; }
.red { fill: #b31412; }
.orange { fill: #d56e0c; }
.area text { font-size: 38px; font-weight: 500; fill: #55585c; text-anchor: middle; }
.area .hi { font-size: 35px; font-weight: 700; }
.city text { font-size: 58px; font-weight: 500; fill: #3c4043; text-anchor: middle; }
.city .hib { font-size: 54px; font-weight: 700; }
.road-name text { font-size: 38px; fill: #5b6065; }
.road-name .mid { font-size: 44px; font-weight: 500; }
.water text { font-size: 38px; fill: #2b6cc9; text-anchor: middle; }
.om { font-size: 44px; font-weight: 700; fill: #fff; }
.larger {
  position: absolute;
  left: 13px;
  top: 13px;
  width: 145px;
  height: 33px;
  padding-right: 1px;
  border-radius: 2px;
  background: #fff;
  box-shadow: 0 1px 4px #0000004d;
  color: #1a73e8;
  font: 15px/32px Roboto, sans-serif;
  text-align: center;
}
.glogo { position: absolute; left: 894px; top: 141px; font: 500 21px/26px "Open Sans", sans-serif; letter-spacing: -1.800px; -webkit-text-stroke: .5px; text-shadow: 0 0 2px #fff; }
.glogo i { color: #4285f4; }
.glogo i:first-child { letter-spacing: -.5px; }
.glogo i:nth-child(2), .glogo i:nth-child(6) { color: #ea4335; letter-spacing: -.6px; }
.glogo i:nth-child(3) { color: #fbbc05; letter-spacing: -.6px; }
.glogo i:nth-child(4) { letter-spacing: -.4px; }
.glogo i:nth-child(5) { color: #34a853; letter-spacing: -.4px; }
.attrib {
  position: absolute;
  right: 0;
  bottom: 0;
  height: 17px;
  width: 278px;
  display: flex;
  gap: 15px;
  padding: 0 8px 0 4px;
  background: #f5f5f5b3;
  font: 12.500px/19px Roboto, sans-serif;
  color: #222;
  white-space: nowrap;
}
.attrib .terms { margin-left: auto; }
.page footer { flex: none; height: 49px; background: #000; color: #fff; font: 17.500px/45px Inter, sans-serif; text-align: center; }
.wa { position: absolute; right: 26px; bottom: 25px; width: 60px; height: 60px; }

.scroll {
  width: 21px;
  display: flex;
  flex-direction: column;
  align-items: center;
  padding: 9px 0 7px;
  background: #f0f0f0;
}
.scroll i { width: 17px; height: 322px; margin: 519px 0 7px; background: #c1c1c1; }
.side {
  flex: 1;
  display: flex;
  flex-direction: column;
  align-items: center;
  gap: 25px;
  padding: 15px 0 14px 1px;
  border-left: 1px solid #e9eaec;
}
.side svg { flex: none; width: 20px; height: 20px; fill: none; stroke: #5d7583; stroke-width: 1.5; }
.side .gear { margin-top: auto; }

/* taskbar */
.taskbar {
  flex: none;
  height: 60px;
  display: flex;
  align-items: center;
  padding-left: 585px;
  border-top: 1px solid #bfc4cc;
  background: linear-gradient(90deg, #dce8f7 0, #d9e2f6 30%, #d2e2f8 40%, #dadcf0 58%, #d6e0f6 72%, #e4ecf7 85%, #deeaf7 100%);
}
.start { width: 29px; height: 29px; }
.search {
  display: flex;
  align-items: center;
  width: 273px;
  height: 39px;
  margin-left: 18px;
  padding: 0 9px 0 13px;
  border-radius: 20px;
  background: #f3f7fe;
  box-shadow: 0 0 0 1px #cdd3df;
  font-size: 17px;
  letter-spacing: -.4px;
  color: #55585c;
}
.search span { flex: 1; padding-left: 11px; }
.apps { display: grid; grid-template-columns: repeat(8, 55px); margin-left: 3px; place-items: center; }
.apps > svg { width: 30px; height: 30px; }
.cur {
  width: 48px;
  height: 48px;
  border-radius: 5px;
  display: flex;
  justify-content: center;
  align-items: center;
  background: linear-gradient(#5a66b8, #5a66b8) center bottom/20px 4px no-repeat #ebeff9;
  box-shadow: 0 0 0 1px #dfe3ee;
}
.help { font: bold 25px "Open Sans", sans-serif; fill: #fff; }
.pre { font: bold 8px "Open Sans", sans-serif; fill: #000; stroke: none; }
.tray { display: flex; align-items: center; margin-left: 198px; font-size: 14.800px; line-height: 20px; color: #111; letter-spacing: -.2px; }
.tray svg { fill: none; stroke: #111; stroke-width: 1.5; }
.tray .copilot { stroke: none; margin-left: 22px; }
.lang { width: 30px; margin: -2px 22px 0 26px; text-align: center; }
.mute { margin: 0 10px 0 9px; }
.clock { width: 82px; margin: -2px 0 0 16px; text-align: right; white-space: nowrap; }
.bell { margin-left: 11px; }
```
